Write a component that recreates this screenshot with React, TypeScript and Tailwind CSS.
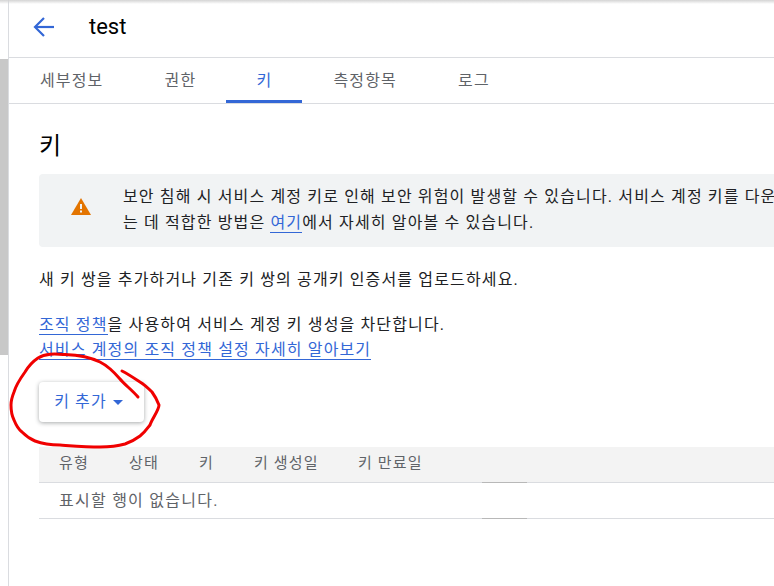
import React from 'react';

const tabs = [
  { label: '세부정보', margin: 'ml-[15px]' },
  { label: '권한', margin: 'ml-[23px]' },
  { label: '키', margin: 'ml-[8px]', active: true },
  { label: '측정항목', margin: 'ml-[15px]' },
  { label: '로그', margin: 'ml-[23px]' },
];

const columns = [
  { label: '유형', width: 'w-[70px]' },
  { label: '상태', width: 'w-[70px]' },
  { label: '키', width: 'w-[55px]' },
  { label: '키 생성일', width: 'w-[104px]' },
  { label: '키 만료일', width: 'w-[104px]' },
];

const App: React.FC = () => {
  return (
    <div className="relative flex h-[586px] w-[774px] overflow-hidden bg-white font-['Roboto','Noto_Sans_CJK_KR',sans-serif] text-[16px] tracking-[1.15px] text-[#202124]">
      {/* Window shadow - top */}
      <div className="absolute left-0 top-0 h-[4px] w-full bg-gradient-to-b from-[#d4d4d4] to-transparent"></div>

      {/* Scrollbar strip - left */}
      <div className="w-2 shrink-0 pt-[59px]">
        <div className="h-[296px] w-full bg-[#c8c8c8]"></div>
      </div>

      <div className="min-w-0 flex-1 border-l border-[#dadce0]">
        <div className="flex h-[57px] items-center pl-[24px] pb-[3px]">
          <svg viewBox="0 0 22 22" className="h-[22px] w-[22px]" fill="none" stroke="#3367d6" strokeWidth="2.2">
            <path d="M21 11 H3" />
            <path d="M11 2 L2 11 L11 20" />
          </svg>
          <h1 className="ml-[34px] text-[22px] leading-none tracking-normal text-black">test</h1>
        </div>

        {/* Tabs */}
        <div className="flex h-[47px] border-y border-[#dadce0]">
          {tabs.map((tab) => (
            <div
              key={tab.label}
              className={`flex min-w-[76px] items-center justify-center px-4 ${tab.margin} ${
                tab.active ? 'border-b-[3px] border-[#3367d6] pt-[3px] text-[#3367d6]' : 'text-[#5f6368]'
              }`}
            >
              {tab.label}
            </div>
          ))}
        </div>

        <div className="pl-[30px]">
          <h2 className="mt-[26px] text-[24px] leading-[32px] text-black">키</h2>

          <div className="mt-[12px] flex h-[73px] w-[800px] items-center rounded-[4px] bg-[#f1f3f4]">
            <div className="mb-[8px] flex w-[84px] shrink-0 justify-center">
              <svg viewBox="0 0 20 17" className="h-[17px] w-[20px]">
                <path d="M10 0 L20 17 H0 Z" fill="#e37400" />
                <rect x="9" y="6" width="2" height="5" fill="#f1f3f4" />
                <rect x="9" y="12.5" width="2" height="2" fill="#f1f3f4" />
              </svg>
            </div>
            <p className="mb-[1px] whitespace-nowrap leading-[26px]">
              보안 침해 시 서비스 계정 키로 인해 보안 위험이 발생할 수 있습니다. 서비스 계정 키를 다운로드하<br />
              는 데 적합한 방법은 <span className="border-b border-[#3367d6] text-[#3367d6]">여기</span>에서 자세히 알아볼 수 있습니다.
            </p>
          </div>

          <p className="mt-[21px] leading-[24px]">새 키 쌍을 추가하거나 기존 키 쌍의 공개키 인증서를 업로드하세요.</p>

          <div className="mt-[20px] leading-[25px]">
            <p>
              <span className="border-b border-[#3367d6] text-[#3367d6]">조직 정책</span>을 사용하여 서비스 계정 키 생성을 차단합니다.
            </p>
            <p>
              <span className="border-b border-[#3367d6] text-[#3367d6]">서비스 계정의 조직 정책 설정 자세히 알아보기</span>
            </p>
          </div>

          <button className="mt-[20px] flex h-10 w-[105px] items-center justify-center gap-[6px] rounded-[4px] bg-white pr-[6px] text-[#3367d6] shadow-[0_1px_4px_rgba(60,64,67,0.45)]">
            키 추가
            <svg viewBox="0 0 10 5" className="h-[5px] w-[10px]">
              <path d="M0 0 H10 L5 5 Z" fill="#3367d6" />
            </svg>
          </button>

          {/* Table */}
          <div className="mt-[25px] w-[800px] text-[#5f6368]">
            <div className="relative flex h-[36px] items-center border-b border-[#dadce0] bg-[#f3f3f3] pb-[2px] pl-5 text-[15px]">
              {columns.map((col) => (
                <div key={col.label} className={`${col.width} shrink-0`}>
                  {col.label}
                </div>
              ))}
              <span className="absolute -bottom-px left-[443px] h-px w-[45px] bg-[#b8b8b8]"></span>
            </div>
            <div className="relative flex h-[36px] items-center border-b border-[#dadce0] pl-5 tracking-[1.25px]">
              표시할 행이 없습니다.
              <span className="absolute -bottom-px left-[443px] h-px w-[45px] bg-[#b8b8b8]"></span>
            </div>
          </div>
        </div>
      </div>

      {/* Red hand-drawn circle around the button */}
      <svg viewBox="0 0 774 586" className="pointer-events-none absolute left-0 top-0 h-[586px] w-[774px]">
        <path
          d="M138 397 C132 390 124 384 120 379 C114 372 108 366 100 362 C90 357 78 355 65 354.5 C56 354 46 353 38 358 C32 362 28 367 25 372 C20 379 16 385 14 392 C12 397 11 401 11 405 C11 411 12 416 14 420 C16 425 18 429 22 432 C26 436 30 439 35 441 C43 444 52 445 60 445 C75 446 88 447 100 447 C110 447 118 446 125 444 C131 442 136 439 140 436 C145 432 147 429 150 425 C152 419 159 410 159 405 C157 400 155 396 152 392 C148 388 145 385 140 382 C134 378 128 374 122 371"
          fill="none"
          stroke="#f00000"
          strokeWidth="3"
          strokeLinecap="round"
        />
      </svg>
    </div>
  );
};

export default App;
